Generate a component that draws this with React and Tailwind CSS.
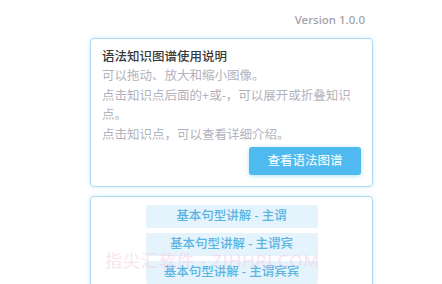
import React from 'react';

const items = ['基本句型讲解 - 主谓', '基本句型讲解 - 主谓宾', '基本句型讲解 - 主谓宾宾', '基本句型讲解 - 主系表'];

const App = () => {
  return (
    <div
      className="relative w-[442px] h-[284px] overflow-hidden bg-white"
      style={{ fontFamily: '"Noto Sans", "Noto Sans CJK SC", sans-serif' }}
    >
      <div className="w-[283px] ml-[90px] pt-[12px]">
        <div className="flex justify-end pr-[8px] text-[11.5px] leading-[16px] text-[#a0a0a6] font-medium">
          Version 1.0.0
        </div>

        {/* Instructions */}
        <div className="mt-[10px] border border-[#a9dcef] rounded-[4px] px-[11px] pt-[8px] pb-[11px] shadow-[0_0_4px_rgba(120,200,235,0.35)]">
          <h2 className="text-[12.5px] leading-[19px] text-[#3a3a3a] font-medium">语法知识图谱使用说明</h2>
          <div className="text-[12.5px] leading-[19.5px] text-[#b2b2bc]">
            <p>可以拖动、放大和缩小图像。</p>
            <p>点击知识点后面的+或-，可以展开或折叠知识点。</p>
            <p>点击知识点，可以查看详细介绍。</p>
          </div>
          <div className="flex justify-end mt-[3px]">
            <button className="w-[112px] h-[28px] rounded-[3px] bg-[#4fbaf0] text-white text-[12.5px] shadow-[0_1px_4px_rgba(79,186,240,0.45)]">
              查看语法图谱
            </button>
          </div>
        </div>

        {/* Topics */}
        <div className="mt-[9px] border border-[#a9dcef] rounded-[4px] pt-[8px] pb-[10px] flex flex-col items-center gap-[5px] shadow-[0_0_4px_rgba(120,200,235,0.35)]">
          {items.map((t) => (
            <div
              key={t}
              className="w-[172px] h-[23px] flex items-center justify-center bg-[#e4f3fc] rounded-[2px] text-[12.5px] font-medium text-[#5bb5e3]"
            >
              {t}
            </div>
          ))}
        </div>
      </div>

      {/* watermark */}
      <div className="absolute left-[105px] top-[250px] text-[17px] leading-[22px] text-[#f7c9e3] opacity-50 tracking-[1px] pointer-events-none">
        指尖汇软件 - ZJHHRJ.COM
      </div>
    </div>
  );
};

export default App;
